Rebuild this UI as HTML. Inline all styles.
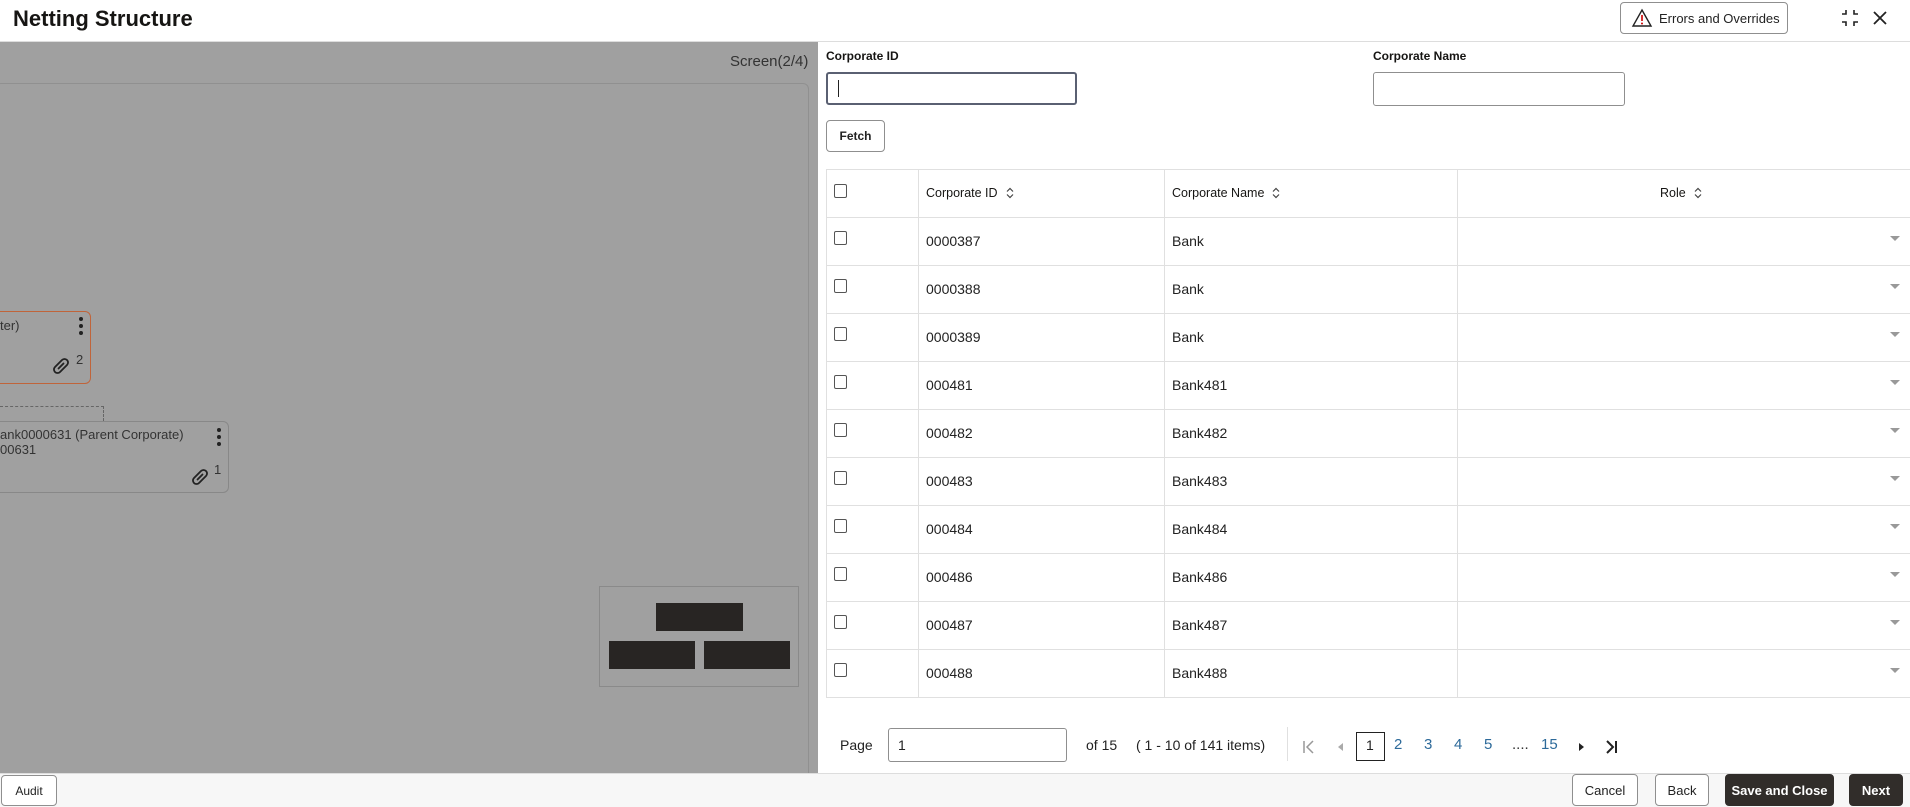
<!DOCTYPE html>
<html><head><meta charset="utf-8"><style>
*{box-sizing:border-box;margin:0;padding:0}
body{width:1910px;height:807px;position:relative;overflow:hidden;background:#fff;font-family:"Liberation Sans",sans-serif;color:#161513}
.a{position:absolute}
.btn{position:absolute;border:1px solid #8f8f8f;border-radius:4px;background:#fff;font-size:13px;font-weight:bold;display:flex;align-items:center;justify-content:center;color:#222}
.dark{background:#312d2a;border-color:#312d2a;color:#fff}
.cb{position:absolute;width:13px;height:14px;border:1.5px solid #555;border-radius:2px;background:#fff}
.t{font-size:14px;color:#222}
.vl{position:absolute;width:1px;background:#e0e0e0}
.hl{position:absolute;height:1px;background:#e0e0e0}
.pg{position:absolute;top:736px;font-size:15px;color:#2d6a9a}
.th{position:absolute;top:186px;font-size:12.5px;color:#161513;display:flex;align-items:center}
.th svg{margin-left:8px}
</style></head><body>
<div class="a" style="left:13px;top:6px;font-size:22px;font-weight:bold">Netting Structure</div>
<div class="btn" style="left:1620px;top:2px;width:168px;height:32px;font-weight:normal;font-size:13px;justify-content:flex-start;padding-left:10px">
<svg width="22" height="20" viewBox="0 0 22 20"><path d="M11 2 L20 18 H2 Z" fill="none" stroke="#222" stroke-width="1.4"/><line x1="11" y1="7" x2="11" y2="13" stroke="#c00" stroke-width="1.6"/><circle cx="11" cy="15.5" r="1" fill="#c00"/></svg>
<span style="margin-left:6px">Errors and Overrides</span></div>
<svg class="a" style="left:1840px;top:8px" width="20" height="20" viewBox="0 0 20 20" stroke="#222" stroke-width="1.6" fill="none"><path d="M6 2v4H2M14 2v4h4M6 18v-4H2M14 18v-4h4"/></svg>
<svg class="a" style="left:1872px;top:10px" width="16" height="16" viewBox="0 0 16 16" stroke="#222" stroke-width="1.8"><path d="M2 2L14 14M14 2L2 14"/></svg>
<div class="hl" style="left:0;top:41px;width:1910px;background:#ddd"></div>

<div class="a" style="left:0;top:42px;width:818px;height:731px;background:#a0a0a0"></div>
<div class="a" style="left:730px;top:53px;font-size:15px;color:#333">Screen(2/4)</div>
<div class="a" style="left:-5px;top:83px;width:814px;height:700px;border:1px solid #909090;border-radius:6px"></div>
<div class="a" style="left:-10px;top:311px;width:101px;height:73px;border:1px solid #c0643a;border-radius:6px"></div>
<div class="a" style="left:0;top:318px;font-size:13px;color:#333">ter)</div>
<svg class="a" style="left:78px;top:316px" width="6" height="22"><circle cx="3" cy="3" r="2" fill="#222"/><circle cx="3" cy="10" r="2" fill="#222"/><circle cx="3" cy="17" r="2" fill="#222"/></svg>
<svg class="a" style="left:49px;top:354px" width="24" height="24" viewBox="0 0 24 24" fill="none" stroke="#222" stroke-width="1.8" stroke-linecap="round"><path d="M10 9L6 13a3.5 3.5 0 0 0 5 5l3-3M14 15l4-4a3.5 3.5 0 0 0-5-5l-3 3M9.5 14.5l5-5"/></svg>
<div class="a" style="left:76px;top:352px;font-size:13px;color:#333">2</div>
<div class="a" style="left:0;top:406px;width:104px;border-top:1.5px dashed #666"></div>
<div class="a" style="left:103px;top:406px;height:15px;border-left:1.5px dashed #666"></div>
<div class="a" style="left:-10px;top:421px;width:239px;height:72px;border:1px solid #888;border-radius:6px"></div>
<div class="a" style="left:0;top:427px;font-size:13px;color:#333;line-height:15px">ank0000631 (Parent Corporate)<br>00631</div>
<svg class="a" style="left:216px;top:427px" width="6" height="22"><circle cx="3" cy="3" r="2" fill="#222"/><circle cx="3" cy="10" r="2" fill="#222"/><circle cx="3" cy="17" r="2" fill="#222"/></svg>
<svg class="a" style="left:188px;top:465px" width="24" height="24" viewBox="0 0 24 24" fill="none" stroke="#222" stroke-width="1.8" stroke-linecap="round"><path d="M10 9L6 13a3.5 3.5 0 0 0 5 5l3-3M14 15l4-4a3.5 3.5 0 0 0-5-5l-3 3M9.5 14.5l5-5"/></svg>
<div class="a" style="left:214px;top:462px;font-size:13px;color:#333">1</div>
<div class="a" style="left:599px;top:586px;width:200px;height:101px;border:1px solid #8a8a8a"></div>
<div class="a" style="left:656px;top:603px;width:87px;height:28px;background:#282523"></div>
<div class="a" style="left:609px;top:641px;width:86px;height:28px;background:#282523"></div>
<div class="a" style="left:704px;top:641px;width:86px;height:28px;background:#282523"></div>

<div class="a" style="left:826px;top:49px;font-size:12px;font-weight:bold">Corporate ID</div>
<div class="a" style="left:826px;top:72px;width:251px;height:33px;border:2px solid #5a6072;border-radius:3px"></div>
<div class="a" style="left:838px;top:80px;width:1px;height:17px;background:#222"></div>
<div class="a" style="left:1373px;top:49px;font-size:12px;font-weight:bold">Corporate Name</div>
<div class="a" style="left:1373px;top:72px;width:252px;height:34px;border:1px solid #8f8f8f;border-radius:3px"></div>
<div class="btn" style="left:826px;top:120px;width:59px;height:32px;font-size:12px">Fetch</div>

<div class="hl" style="left:826px;top:169px;width:1084px"></div>
<div class="vl" style="left:826px;top:169px;height:528px"></div>
<div class="vl" style="left:918px;top:169px;height:528px"></div>
<div class="vl" style="left:1164px;top:169px;height:528px"></div>
<div class="vl" style="left:1457px;top:169px;height:528px"></div>
<div class="cb" style="left:834px;top:184px"></div>
<div class="th" style="left:926px">Corporate ID <svg width="8" height="12" viewBox="0 0 8 12" fill="none" stroke="#444" stroke-width="1.2"><path d="M1 4.5L4 1.5L7 4.5M1 7.5L4 10.5L7 7.5"/></svg></div>
<div class="th" style="left:1172px">Corporate Name <svg width="8" height="12" viewBox="0 0 8 12" fill="none" stroke="#444" stroke-width="1.2"><path d="M1 4.5L4 1.5L7 4.5M1 7.5L4 10.5L7 7.5"/></svg></div>
<div class="th" style="left:1660px">Role <svg width="8" height="12" viewBox="0 0 8 12" fill="none" stroke="#444" stroke-width="1.2"><path d="M1 4.5L4 1.5L7 4.5M1 7.5L4 10.5L7 7.5"/></svg></div>
<div id="rows"></div>
<script>
var d=[["0000387","Bank"],["0000388","Bank"],["0000389","Bank"],["000481","Bank481"],["000482","Bank482"],["000483","Bank483"],["000484","Bank484"],["000486","Bank486"],["000487","Bank487"],["000488","Bank488"]];
var h="";d.forEach(function(r,i){var y=217+i*48;
h+='<div class="hl" style="left:826px;top:'+y+'px;width:1084px"></div>';
h+='<div class="cb" style="left:834px;top:'+(y+14)+'px"></div>';
h+='<div class="a t" style="left:926px;top:'+(y+16)+'px">'+r[0]+'</div>';
h+='<div class="a t" style="left:1172px;top:'+(y+16)+'px">'+r[1]+'</div>';
h+='<div class="a" style="left:1890px;top:'+(y+19)+'px;width:0;height:0;border-left:5px solid transparent;border-right:5px solid transparent;border-top:5px solid #999"></div>';});
h+='<div class="hl" style="left:826px;top:697px;width:1084px"></div>';
document.getElementById("rows").innerHTML=h;
</script>

<div class="a t" style="left:840px;top:737px">Page</div>
<div class="a" style="left:888px;top:728px;width:179px;height:34px;border:1px solid #8f8f8f;border-radius:3px"></div>
<div class="a t" style="left:898px;top:737px">1</div>
<div class="a t" style="left:1086px;top:737px">of 15</div>
<div class="a t" style="left:1136px;top:737px">( 1 - 10 of 141 items)</div>
<div class="vl" style="left:1287px;top:727px;height:34px"></div>
<svg class="a" style="left:1302px;top:739px" width="14" height="16" viewBox="0 0 14 16" fill="none" stroke="#999" stroke-width="1.5"><path d="M2 2v12M11 2L5 8l6 6"/></svg>
<svg class="a" style="left:1336px;top:742px" width="8" height="10" viewBox="0 0 8 10"><path d="M7 1L2 5l5 4z" fill="#aaa"/></svg>
<div class="a" style="left:1356px;top:732px;width:29px;height:29px;border:1.5px solid #222"></div>
<div class="a t" style="left:1366px;top:737px">1</div>
<div class="pg" style="left:1394px">2</div><div class="pg" style="left:1424px">3</div><div class="pg" style="left:1454px">4</div><div class="pg" style="left:1484px">5</div>
<div class="pg" style="left:1512px;color:#333">....</div><div class="pg" style="left:1541px">15</div>
<svg class="a" style="left:1578px;top:742px" width="8" height="10" viewBox="0 0 8 10"><path d="M1 1l5 4-5 4z" fill="#222"/></svg>
<svg class="a" style="left:1604px;top:739px" width="14" height="16" viewBox="0 0 14 16" fill="none" stroke="#222" stroke-width="2"><path d="M3 2l6 6-6 6M12 2v12"/></svg>

<div class="a" style="left:0;top:773px;width:1910px;height:34px;background:#f7f7f7;border-top:1px solid #ddd"></div>
<div class="btn" style="left:1px;top:775px;width:56px;height:31px;font-weight:normal;font-size:12px">Audit</div>
<div class="btn" style="left:1572px;top:774px;width:66px;height:32px;font-weight:normal">Cancel</div>
<div class="btn" style="left:1655px;top:774px;width:54px;height:32px;font-weight:normal">Back</div>
<div class="btn dark" style="left:1725px;top:774px;width:109px;height:32px">Save and Close</div>
<div class="btn dark" style="left:1849px;top:774px;width:54px;height:32px">Next</div>
</body></html>
